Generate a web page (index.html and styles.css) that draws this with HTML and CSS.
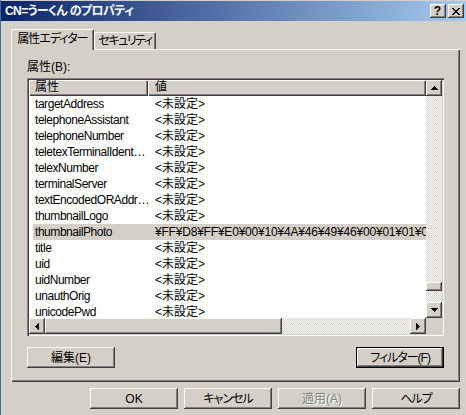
FILE: index.html
```html
<!DOCTYPE html>
<html lang="ja">
<head>
<meta charset="utf-8">
<title>CN=うーくん のプロパティ</title>
<link rel="stylesheet" href="styles.css">
</head>
<body>
  <div class="titlebar">
    <span class="title">CN=うーくん のプロパティ</span>
    <div class="caption-btns">
      <div class="cbtn help">?</div>
      <div class="cbtn">
        <svg width="8" height="7" viewBox="0 0 8 7" shape-rendering="crispEdges">
          <path d="M0 0h2v1H0zM6 0h2v1H6zM1 1h2v1H1zM5 1h2v1H5zM2 2h4v1H2zM3 3h2v1H3zM2 4h4v1H2zM1 5h2v1H1zM5 5h2v1H5zM0 6h2v1H0zM6 6h2v1H6z" fill="#000"/>
        </svg>
      </div>
    </div>
  </div>

  <div class="tabs">
    <div class="tab active">属性エディター</div>
    <div class="tab inactive">セキュリティ</div>
  </div>

  <div class="panel">
    <div class="label">属性(B):</div>
    <div class="listview">
      <div class="lv-main">
        <div class="lv-content">
          <div class="lv-header">
            <div class="hcol h1">属性</div>
            <div class="hcol h2">値</div>
          </div>
          <div class="row"><span class="c1">targetAddress</span><span class="c2">&lt;未設定&gt;</span></div>
          <div class="row"><span class="c1">telephoneAssistant</span><span class="c2">&lt;未設定&gt;</span></div>
          <div class="row"><span class="c1">telephoneNumber</span><span class="c2">&lt;未設定&gt;</span></div>
          <div class="row"><span class="c1">teletexTerminalIdent…</span><span class="c2">&lt;未設定&gt;</span></div>
          <div class="row"><span class="c1">telexNumber</span><span class="c2">&lt;未設定&gt;</span></div>
          <div class="row"><span class="c1">terminalServer</span><span class="c2">&lt;未設定&gt;</span></div>
          <div class="row"><span class="c1">textEncodedORAddr…</span><span class="c2">&lt;未設定&gt;</span></div>
          <div class="row"><span class="c1">thumbnailLogo</span><span class="c2">&lt;未設定&gt;</span></div>
          <div class="row sel"><span class="c1">thumbnailPhoto</span><span class="c2 hex">¥FF¥D8¥FF¥E0¥00¥10¥4A¥46¥49¥46¥00¥01¥01¥01¥00¥60¥00¥60¥00¥00</span></div>
          <div class="row"><span class="c1">title</span><span class="c2">&lt;未設定&gt;</span></div>
          <div class="row"><span class="c1">uid</span><span class="c2">&lt;未設定&gt;</span></div>
          <div class="row"><span class="c1">uidNumber</span><span class="c2">&lt;未設定&gt;</span></div>
          <div class="row"><span class="c1">unauthOrig</span><span class="c2">&lt;未設定&gt;</span></div>
          <div class="row"><span class="c1">unicodePwd</span><span class="c2">&lt;未設定&gt;</span></div>
        </div>
        <div class="vscroll">
          <div class="sbtn">
            <svg width="7" height="4" viewBox="0 0 7 4" shape-rendering="crispEdges"><path d="M3 0h1v1h1v1h1v1h1v1H0V3h1V2h1V1h1z" fill="#000"/></svg>
          </div>
          <div class="track vtrack1"></div>
          <div class="vthumb"></div>
          <div class="track vtrack2"></div>
          <div class="sbtn">
            <svg width="7" height="4" viewBox="0 0 7 4" shape-rendering="crispEdges"><path d="M0 0h7v1H6v1H5v1H4v1H3V3H2V2H1V1H0z" fill="#000"/></svg>
          </div>
        </div>
      </div>
      <div class="hscroll-row">
        <div class="sbtn">
          <svg width="4" height="7" viewBox="0 0 4 7" shape-rendering="crispEdges"><path d="M3 0h1v7H3V6H2V5H1V4H0V3h1V2h1V1h1z" fill="#000"/></svg>
        </div>
        <div class="hthumb"></div>
        <div class="track htrack"></div>
        <div class="sbtn">
          <svg width="4" height="7" viewBox="0 0 4 7" shape-rendering="crispEdges"><path d="M0 0h1v1h1v1h1v1h1v1H3v1H2v1H1v1H0z" fill="#000"/></svg>
        </div>
        <div class="corner"></div>
      </div>
    </div>
    <div class="panel-buttons">
      <button class="btn">編集(E)</button>
      <button class="btn default kana">フィルター(F)</button>
    </div>
  </div>

  <div class="dlg-buttons">
    <button class="btn">OK</button>
    <button class="btn kana">キャンセル</button>
    <button class="btn disabled">適用(A)</button>
    <button class="btn kana">ヘルプ</button>
  </div>
</body>
</html>
```

FILE: styles.css
```css
* { box-sizing: border-box; }
html, body { margin: 0; padding: 0; }
body {
  width: 466px;
  height: 415px;
  overflow: hidden;
  background: #d4d0c8;
  border-left: 1px solid #3a6ea5;
  font-family: "Liberation Sans", "Noto Sans CJK JP", sans-serif;
  font-size: 12px;
  font-feature-settings: "palt";
  color: #000;
}

/* title bar */
.titlebar {
  margin-top: 1px;
  height: 20px;
  display: flex;
  align-items: center;
  justify-content: space-between;
  padding: 0 2px 0 4px;
  background: linear-gradient(to right, #0a246a, #a6caf0);
}
.title {
  color: #fff;
  font-weight: bold;
  white-space: nowrap;
  line-height: 14px;
  letter-spacing: -0.6px;
}
.caption-btns { display: flex; gap: 2px; }
.cbtn {
  width: 16px;
  height: 14px;
  display: flex;
  align-items: center;
  justify-content: center;
  background: #d4d0c8;
  box-shadow: inset -1px -1px #404040, inset 1px 1px #fff, inset -2px -2px #808080;
}
.cbtn.help {
  font-weight: bold;
  font-size: 12px;
  line-height: 12px;
  padding-right: 1px;
}

/* tabs */
.tabs {
  display: flex;
  align-items: flex-end;
  margin: 8px 0 -1px 10px;
  position: relative;
  z-index: 1;
}
.tab {
  height: 17px;
  margin-bottom: 1px;
  background: #d4d0c8;
  border-top: 1px solid #fff;
  border-left: 1px solid #fff;
  border-right: 1px solid #404040;
  border-radius: 2px 2px 0 0;
  box-shadow: inset -1px 0 #808080;
  display: flex;
  align-items: center;
  justify-content: center;
  white-space: nowrap;
  line-height: 14px;
  letter-spacing: -1px;
}
.tab.active {
  width: 83px;
  height: 21px;
  margin-bottom: 0;
  padding-bottom: 2px;
}
.tab.inactive {
  width: 62px;
  letter-spacing: -1.5px;
}

/* panel */
.panel {
  margin-left: 10px;
  width: 449px;
  height: 333px;
  padding: 11px 0 0 16px;
  box-shadow: inset 1px 1px #fff, inset -1px -1px #404040, inset -2px -2px #808080;
}
.label {
  height: 14px;
  line-height: 14px;
  margin-bottom: 4px;
}

/* list view */
.listview {
  width: 417px;
  height: 258px;
  padding: 2px;
  background: #fff;
  display: flex;
  flex-direction: column;
  box-shadow: inset 1px 1px #808080, inset 2px 2px #404040, inset -1px -1px #fff, inset -2px -2px #d4d0c8;
}
.lv-main {
  display: flex;
  height: 238px;
}
.lv-content {
  flex: 1;
  overflow: hidden;
  min-width: 0;
}
.lv-header {
  display: flex;
  height: 16px;
}
.hcol {
  height: 16px;
  line-height: 15px;
  background: #d4d0c8;
  box-shadow: inset 1px 1px #fff, inset -1px -1px #404040, inset -2px -2px #808080;
  white-space: nowrap;
}
.hcol.h1 { width: 119px; padding-left: 6px; }
.hcol.h2 { flex: 1; padding-left: 7px; }

.row {
  display: flex;
  height: 16px;
  line-height: 16px;
  margin-left: 4px;
  white-space: nowrap;
}
.row.sel { background: #d4d0c8; }
.row .c1 {
  flex: none;
  width: 115px;
  padding-left: 2px;
  overflow: hidden;
  letter-spacing: -0.45px;
}
.row .c2 {
  padding-left: 7px;
}
.row .c2.hex {
  letter-spacing: -0.2px;
}

/* scrollbars */
.sbtn {
  flex: none;
  width: 16px;
  height: 16px;
  display: flex;
  align-items: center;
  justify-content: center;
  background: #d4d0c8;
  box-shadow: inset -1px -1px #404040, inset 1px 1px #fff, inset -2px -2px #808080;
}
.sbtn svg { display: block; }
.track {
  background: repeating-conic-gradient(#fff 0 25%, #d4d0c8 0 50%) 0 0 / 2px 2px;
}
.vscroll {
  width: 16px;
  display: flex;
  flex-direction: column;
}
.vtrack1 { height: 186px; }
.vthumb {
  height: 9px;
  background: #d4d0c8;
  box-shadow: inset -1px -1px #404040, inset 1px 1px #fff, inset -2px -2px #808080;
}
.vtrack2 { flex: 1; }

.hscroll-row {
  display: flex;
  height: 16px;
}
.hthumb {
  width: 237px;
  background: #d4d0c8;
  box-shadow: inset -1px -1px #404040, inset 1px 1px #fff, inset -2px -2px #808080;
}
.htrack { flex: 1; }
.corner { width: 16px; background: #d4d0c8; }

/* buttons */
.btn {
  width: 88px;
  height: 21px;
  margin: 0;
  padding: 0;
  border: 0;
  background: #d4d0c8;
  font: inherit;
  font-feature-settings: "palt";
  color: #000;
  display: flex;
  align-items: center;
  justify-content: center;
  box-shadow: inset -1px -1px #404040, inset 1px 1px #fff, inset -2px -2px #808080;
  line-height: 14px;
}
.btn.kana { letter-spacing: -1px; }
.btn.default {
  border: 1px solid #000;
  box-shadow: inset -1px -1px #404040, inset 1px 1px #fff, inset -2px -2px #808080;
}
.btn.disabled {
  color: #808080;
  text-shadow: 1px 1px #fff;
}
.panel-buttons {
  display: flex;
  justify-content: space-between;
  width: 417px;
  margin-top: 11px;
}
.dlg-buttons {
  display: flex;
  justify-content: flex-end;
  gap: 6px;
  padding-right: 6px;
  margin-top: 6px;
}
```
